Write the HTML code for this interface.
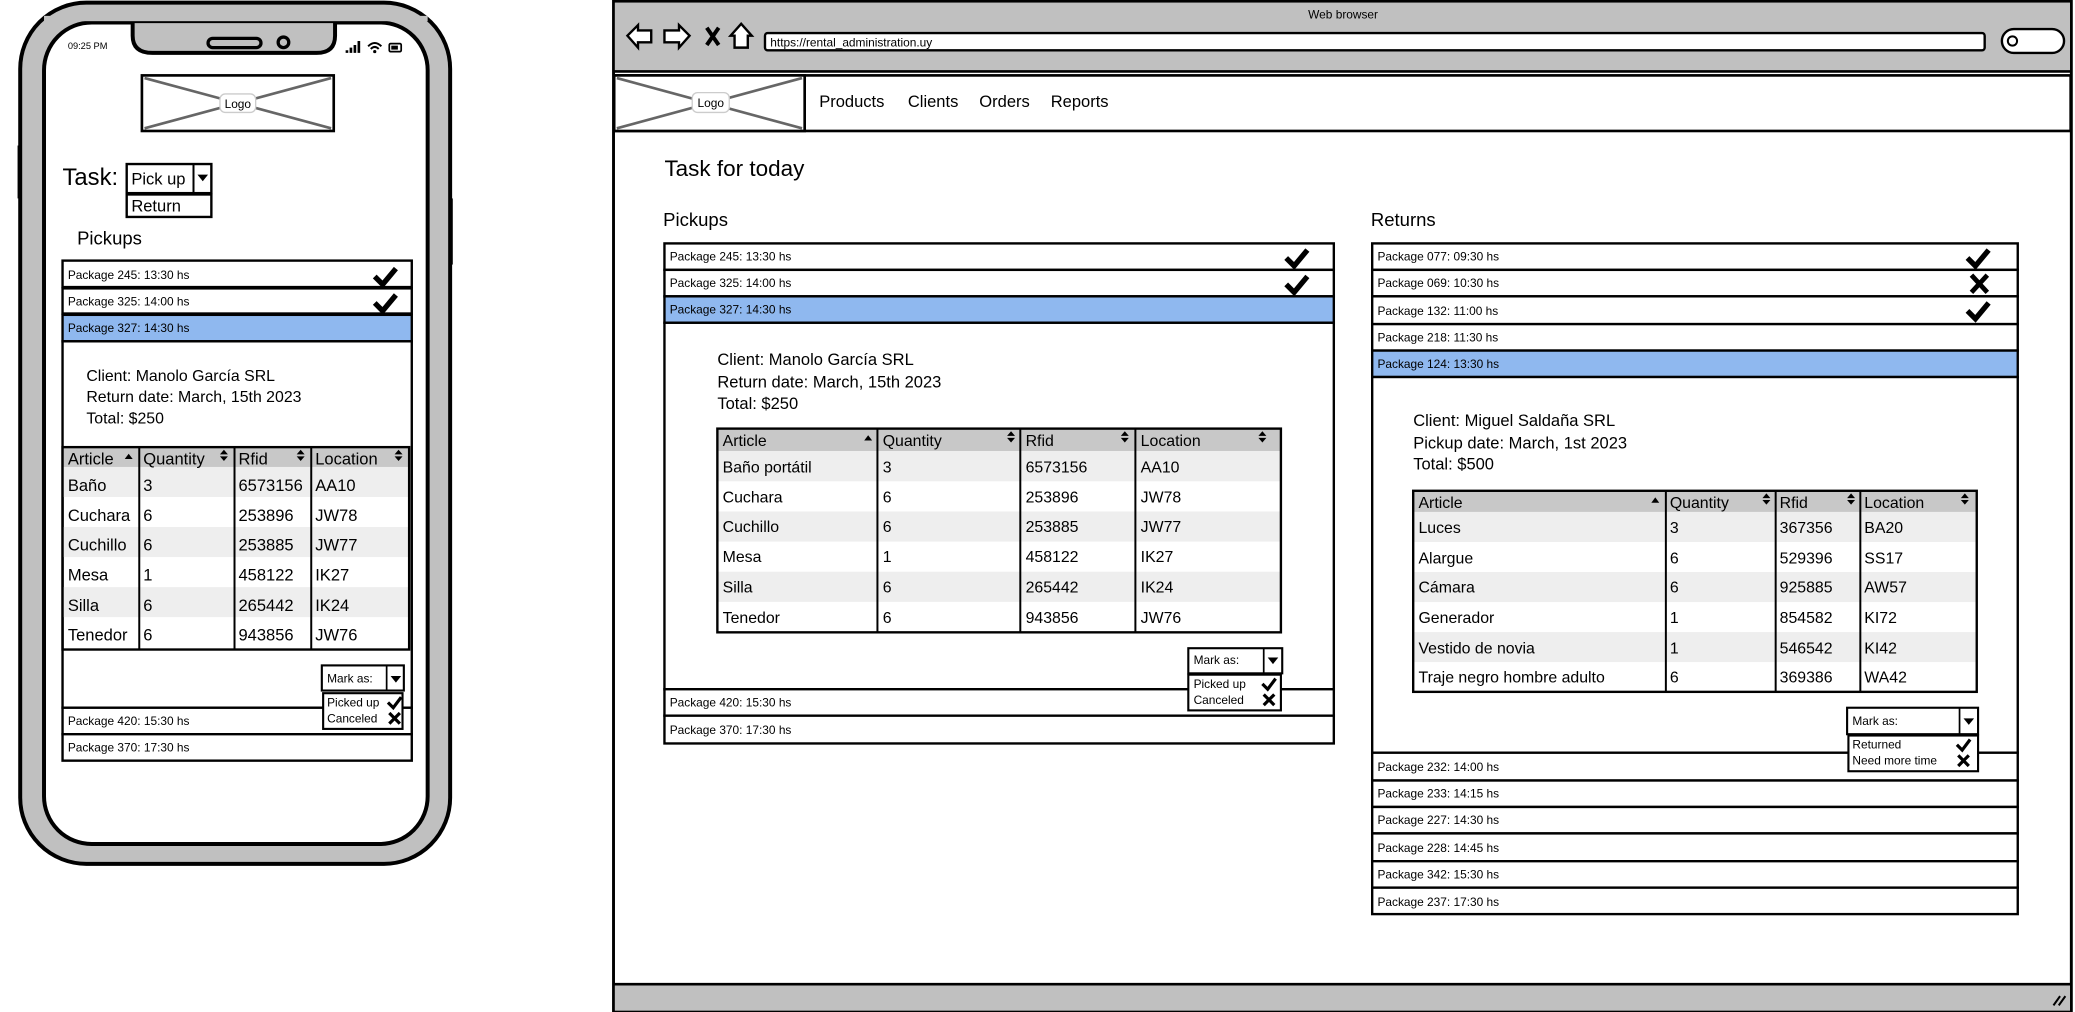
<!DOCTYPE html>
<html><head><meta charset="utf-8"><style>
html,body{margin:0;padding:0;background:#fff;overflow:hidden}
svg{display:block}
text{font-family:"Liberation Sans",sans-serif;fill:#000}
</style></head><body>
<svg width="2075" height="1012" viewBox="0 0 1568 765" xmlns="http://www.w3.org/2000/svg">
<defs>
<g id="chk"><path d="M0,7 L6,13 L16,1" fill="none" stroke="#000" stroke-width="4"/></g>
<g id="xx"><path d="M1,1 L13,14 M13,1 L1,14" fill="none" stroke="#000" stroke-width="3.6"/></g>
<g id="schk"><path d="M0,4 L4,8 L10,0" fill="none" stroke="#000" stroke-width="2.4"/></g>
<g id="sxx"><path d="M0,0 L8,8 M8,0 L0,8" fill="none" stroke="#000" stroke-width="2.4"/></g>
<g id="ud"><path d="M0,3.5 L3,0 L6,3.5Z M0,5 L6,5 L3,8.5Z" fill="#000"/></g>
<g id="up"><path d="M0,4 L3,0 L6,4Z" fill="#000"/></g>
<g id="dn"><path d="M0,0 L8,0 L4,5Z" fill="#000"/></g>
</defs>

<!-- ================= PHONE ================= -->
<rect x="15" y="2" width="325" height="651" rx="50" fill="#c0c0c0" stroke="#000" stroke-width="3"/>
<rect x="339" y="150" width="3" height="50" fill="#000"/>
<rect x="13" y="110" width="3" height="40" fill="#000"/>
<rect x="33" y="17" width="290" height="621" rx="36" fill="#fff" stroke="#000" stroke-width="3"/>
<path d="M100,16 L100,27 Q100,40 115,40 L239,40 Q253,40 253,27 L253,16 Z" fill="#c0c0c0" stroke="#000" stroke-width="3"/>
<rect x="33" y="12" width="290" height="4" fill="#c0c0c0"/>
<rect x="157" y="29" width="40" height="7" rx="3.5" fill="#c0c0c0" stroke="#000" stroke-width="2.5"/>
<circle cx="214" cy="32" r="4" fill="#c0c0c0" stroke="#000" stroke-width="2.5"/>
<text x="51" y="37" font-size="7">09:25 PM</text>
<path d="M261,40h2v-2h-2z M264,40h2v-4h-2z M267,40h2v-6h-2z M270,40h2v-9h-2z" fill="#000"/>
<path d="M278,35 Q283,30 288,35 M280,37 Q283,34 286,37" fill="none" stroke="#000" stroke-width="1.5"/><circle cx="283" cy="39" r="1.2"/>
<rect x="294" y="33" width="9" height="6" rx="1" fill="none" stroke="#000" stroke-width="1.3"/><rect x="295.5" y="34.5" width="5" height="3"/>
<!-- logo -->
<rect x="107" y="57" width="145" height="42" fill="#fff" stroke="#000" stroke-width="2"/>
<path d="M109,59 L250,97 M109,97 L250,59" stroke="#666" stroke-width="2"/>
<rect x="166" y="71" width="27" height="14" rx="4" fill="#fff" stroke="#ccc"/>
<text x="179.5" y="81.5" font-size="9" text-anchor="middle">Logo</text>
<!-- task -->
<text x="47" y="140" font-size="18">Task:</text>
<rect x="95.5" y="124" width="64" height="22" fill="#fff" stroke="#000" stroke-width="1.8"/>
<line x1="146" y1="124" x2="146" y2="146" stroke="#000" stroke-width="1.5"/>
<use href="#dn" x="149" y="132"/>
<text x="99" y="139.5" font-size="12.5">Pick up</text>
<rect x="95.5" y="147" width="64" height="17" fill="#fff" stroke="#000" stroke-width="1.8"/>
<text x="99" y="160" font-size="12.5">Return</text>
<text x="58" y="185" font-size="14">Pickups</text>
<!-- list -->
<rect x="47" y="197" width="264" height="20" fill="#fff" stroke="#000" stroke-width="1.8"/>
<text x="51" y="211" font-size="9">Package 245: 13:30 hs</text>
<use href="#chk" x="283" y="202"/>
<rect x="47" y="218" width="264" height="19" fill="#fff" stroke="#000" stroke-width="1.8"/>
<text x="51" y="231" font-size="9">Package 325: 14:00 hs</text>
<use href="#chk" x="283" y="222"/>
<rect x="47" y="238" width="264" height="20" fill="#8fb8ef" stroke="#000" stroke-width="1.8"/>
<text x="51" y="251" font-size="9">Package 327: 14:30 hs</text>
<rect x="47" y="258" width="264" height="277" fill="#fff" stroke="#000" stroke-width="1.8"/>
<text x="65" y="288" font-size="12">Client: Manolo García SRL</text>
<text x="65" y="304" font-size="12">Return date: March, 15th 2023</text>
<text x="65" y="320" font-size="12">Total: $250</text>
<!-- phone table -->
<rect x="47" y="338" width="262" height="15" fill="#c8c8c8"/>
<rect x="47" y="353" width="262" height="22.7" fill="#eee"/>
<rect x="47" y="398.4" width="262" height="22.7" fill="#eee"/>
<rect x="47" y="443.8" width="262" height="22.7" fill="#eee"/>
<rect x="47" y="338" width="262" height="153" fill="none" stroke="#000" stroke-width="1.8"/>
<path d="M105,338V491 M177,338V491 M235,338V491" stroke="#000" stroke-width="1.5"/>
<g font-size="12.5">
<text x="51" y="351">Article</text><use href="#up" x="94" y="343"/>
<text x="108" y="351">Quantity</text><use href="#ud" x="166" y="340"/>
<text x="180" y="351">Rfid</text><use href="#ud" x="224" y="340"/>
<text x="238" y="351">Location</text><use href="#ud" x="298" y="340"/>
<text x="51" y="371">Baño</text><text x="108" y="371">3</text><text x="180" y="371">6573156</text><text x="238" y="371">AA10</text>
<text x="51" y="394">Cuchara</text><text x="108" y="394">6</text><text x="180" y="394">253896</text><text x="238" y="394">JW78</text>
<text x="51" y="416">Cuchillo</text><text x="108" y="416">6</text><text x="180" y="416">253885</text><text x="238" y="416">JW77</text>
<text x="51" y="439">Mesa</text><text x="108" y="439">1</text><text x="180" y="439">458122</text><text x="238" y="439">IK27</text>
<text x="51" y="462">Silla</text><text x="108" y="462">6</text><text x="180" y="462">265442</text><text x="238" y="462">IK24</text>
<text x="51" y="484">Tenedor</text><text x="108" y="484">6</text><text x="180" y="484">943856</text><text x="238" y="484">JW76</text>
</g>
<rect x="47" y="535" width="264" height="20" fill="#fff" stroke="#000" stroke-width="1.8"/>
<text x="51" y="548" font-size="9">Package 420: 15:30 hs</text>
<rect x="47" y="555" width="264" height="20" fill="#fff" stroke="#000" stroke-width="1.8"/>
<text x="51" y="568" font-size="9">Package 370: 17:30 hs</text>
<rect x="243" y="503" width="62" height="19" fill="#fff" stroke="#000" stroke-width="1.6"/>
<line x1="292" y1="503" x2="292" y2="522" stroke="#000" stroke-width="1.3"/>
<use href="#dn" x="295" y="511"/>
<text x="247" y="516" font-size="9">Mark as:</text>
<rect x="244" y="524" width="60" height="27" fill="#fff" stroke="#000" stroke-width="1.6"/>
<text x="247" y="534" font-size="9">Picked up</text><use href="#schk" x="293" y="527"/>
<text x="247" y="546" font-size="9">Canceled</text><use href="#sxx" x="294" y="539"/>

<!-- ================= BROWSER ================= -->
<rect x="463.5" y="1" width="1102" height="763" fill="#fff" stroke="#000" stroke-width="2.2"/>
<rect x="464.5" y="2" width="1100" height="52" fill="#c0c0c0"/>
<line x1="463" y1="54" x2="1566" y2="54" stroke="#000" stroke-width="2"/>
<text x="1015" y="14" font-size="9" text-anchor="middle">Web browser</text>
<path d="M474,27 L482,19 L482,23 L492,23 L492,32 L482,32 L482,36 Z" fill="#fff" stroke="#000" stroke-width="1.8"/>
<path d="M521,27 L513,19 L513,23 L502,23 L502,32 L513,32 L513,36 Z" fill="#fff" stroke="#000" stroke-width="1.8"/>
<path d="M534,21 L543,34 M543,21 L534,34" stroke="#000" stroke-width="3"/>
<path d="M560,18 L568,27 L565,27 L565,36 L555,36 L555,27 L552,27 Z" fill="#fff" stroke="#000" stroke-width="1.8"/>
<rect x="578" y="25" width="922" height="13" rx="2" fill="#fff" stroke="#000" stroke-width="1.8"/>
<text x="582" y="35" font-size="9">https://rental_administration.uy</text>
<rect x="1513" y="22" width="47" height="18" rx="9" fill="#fff" stroke="#000" stroke-width="1.8"/>
<circle cx="1521" cy="31" r="3.5" fill="none" stroke="#000" stroke-width="1.5"/>
<!-- nav -->
<rect x="464" y="57" width="1101" height="42" fill="#fff" stroke="#000" stroke-width="2"/>
<rect x="464" y="57" width="144" height="42" fill="#fff" stroke="#000" stroke-width="2"/>
<path d="M466,59 L606,97 M466,97 L606,59" stroke="#666" stroke-width="2"/>
<rect x="523" y="70" width="28" height="15" rx="4" fill="#fff" stroke="#ccc"/>
<text x="537" y="81" font-size="9" text-anchor="middle">Logo</text>
<g font-size="12.5"><text x="619" y="81">Products</text><text x="686" y="81">Clients</text><text x="740" y="81">Orders</text><text x="794" y="81">Reports</text></g>
<!-- bottom bar -->
<rect x="464.5" y="744" width="1100" height="20" fill="#c0c0c0"/>
<line x1="463" y1="744" x2="1566" y2="744" stroke="#000" stroke-width="2"/>
<path d="M1552,760 L1557,753 M1556,760 L1561,753" stroke="#000" stroke-width="1.5"/>

<text x="502" y="133" font-size="17">Task for today</text>
<text x="501" y="171" font-size="14">Pickups</text>
<text x="1036" y="171" font-size="14">Returns</text>

<!-- pickups list -->
<g font-size="9">
<rect x="502" y="184" width="506" height="20" fill="#fff" stroke="#000" stroke-width="1.8"/><text x="506" y="197">Package 245: 13:30 hs</text>
<rect x="502" y="204" width="506" height="20" fill="#fff" stroke="#000" stroke-width="1.8"/><text x="506" y="217">Package 325: 14:00 hs</text>
<rect x="502" y="224" width="506" height="20" fill="#8fb8ef" stroke="#000" stroke-width="1.8"/><text x="506" y="237">Package 327: 14:30 hs</text>
<rect x="502" y="244" width="506" height="277" fill="#fff" stroke="#000" stroke-width="1.8"/>
<rect x="502" y="521" width="506" height="20" fill="#fff" stroke="#000" stroke-width="1.8"/><text x="506" y="534">Package 420: 15:30 hs</text>
<rect x="502" y="541" width="506" height="21" fill="#fff" stroke="#000" stroke-width="1.8"/><text x="506" y="555">Package 370: 17:30 hs</text>
</g>
<use href="#chk" x="972" y="188"/><use href="#chk" x="972" y="208"/>
<g font-size="12.5">
<text x="542" y="276">Client: Manolo García SRL</text>
<text x="542" y="293">Return date: March, 15th 2023</text>
<text x="542" y="309">Total: $250</text>
</g>
<rect x="542" y="324" width="426" height="17" fill="#c8c8c8"/>
<rect x="542" y="341" width="426" height="22.8" fill="#eee"/>
<rect x="542" y="386.6" width="426" height="22.8" fill="#eee"/>
<rect x="542" y="432.2" width="426" height="22.8" fill="#eee"/>
<rect x="542" y="324" width="426" height="154" fill="none" stroke="#000" stroke-width="1.8"/>
<path d="M663,324V478 M771,324V478 M858,324V478" stroke="#000" stroke-width="1.5"/>
<g font-size="12">
<text x="546" y="337">Article</text><use href="#up" x="653" y="329"/>
<text x="667" y="337">Quantity</text><use href="#ud" x="761" y="326"/>
<text x="775" y="337">Rfid</text><use href="#ud" x="847" y="326"/>
<text x="862" y="337">Location</text><use href="#ud" x="951" y="326"/>
<text x="546" y="357">Baño portátil</text><text x="667" y="357">3</text><text x="775" y="357">6573156</text><text x="862" y="357">AA10</text>
<text x="546" y="380">Cuchara</text><text x="667" y="380">6</text><text x="775" y="380">253896</text><text x="862" y="380">JW78</text>
<text x="546" y="402">Cuchillo</text><text x="667" y="402">6</text><text x="775" y="402">253885</text><text x="862" y="402">JW77</text>
<text x="546" y="425">Mesa</text><text x="667" y="425">1</text><text x="775" y="425">458122</text><text x="862" y="425">IK27</text>
<text x="546" y="448">Silla</text><text x="667" y="448">6</text><text x="775" y="448">265442</text><text x="862" y="448">IK24</text>
<text x="546" y="471">Tenedor</text><text x="667" y="471">6</text><text x="775" y="471">943856</text><text x="862" y="471">JW76</text>
</g>
<rect x="898" y="490" width="71" height="19" fill="#fff" stroke="#000" stroke-width="1.6"/>
<line x1="955" y1="490" x2="955" y2="509" stroke="#000" stroke-width="1.3"/>
<use href="#dn" x="958" y="497"/>
<text x="902" y="502" font-size="9">Mark as:</text>
<rect x="898" y="510" width="70" height="27" fill="#fff" stroke="#000" stroke-width="1.6"/>
<text x="902" y="520" font-size="9">Picked up</text><use href="#schk" x="954" y="513"/>
<text x="902" y="532" font-size="9">Canceled</text><use href="#sxx" x="955" y="525"/>

<!-- returns list -->
<g font-size="9">
<rect x="1037" y="184" width="488" height="20" fill="#fff" stroke="#000" stroke-width="1.8"/><text x="1041" y="197">Package 077: 09:30 hs</text>
<rect x="1037" y="204" width="488" height="20" fill="#fff" stroke="#000" stroke-width="1.8"/><text x="1041" y="217">Package 069: 10:30 hs</text>
<rect x="1037" y="224" width="488" height="21" fill="#fff" stroke="#000" stroke-width="1.8"/><text x="1041" y="238">Package 132: 11:00 hs</text>
<rect x="1037" y="245" width="488" height="20" fill="#fff" stroke="#000" stroke-width="1.8"/><text x="1041" y="258">Package 218: 11:30 hs</text>
<rect x="1037" y="265" width="488" height="20" fill="#8fb8ef" stroke="#000" stroke-width="1.8"/><text x="1041" y="278">Package 124: 13:30 hs</text>
<rect x="1037" y="285" width="488" height="284" fill="#fff" stroke="#000" stroke-width="1.8"/>
<rect x="1037" y="569" width="488" height="21" fill="#fff" stroke="#000" stroke-width="1.8"/><text x="1041" y="583">Package 232: 14:00 hs</text>
<rect x="1037" y="590" width="488" height="20" fill="#fff" stroke="#000" stroke-width="1.8"/><text x="1041" y="603">Package 233: 14:15 hs</text>
<rect x="1037" y="610" width="488" height="20" fill="#fff" stroke="#000" stroke-width="1.8"/><text x="1041" y="623">Package 227: 14:30 hs</text>
<rect x="1037" y="630" width="488" height="21" fill="#fff" stroke="#000" stroke-width="1.8"/><text x="1041" y="644">Package 228: 14:45 hs</text>
<rect x="1037" y="651" width="488" height="20" fill="#fff" stroke="#000" stroke-width="1.8"/><text x="1041" y="664">Package 342: 15:30 hs</text>
<rect x="1037" y="671" width="488" height="20" fill="#fff" stroke="#000" stroke-width="1.8"/><text x="1041" y="685">Package 237: 17:30 hs</text>
</g>
<use href="#chk" x="1487" y="188"/><use href="#xx" x="1489" y="207"/><use href="#chk" x="1487" y="228"/>
<g font-size="12.5">
<text x="1068" y="322">Client: Miguel Saldaña SRL</text>
<text x="1068" y="339">Pickup date: March, 1st 2023</text>
<text x="1068" y="355">Total: $500</text>
</g>
<rect x="1068" y="371" width="426" height="16" fill="#c8c8c8"/>
<rect x="1068" y="387" width="426" height="22.7" fill="#eee"/>
<rect x="1068" y="432.4" width="426" height="22.7" fill="#eee"/>
<rect x="1068" y="477.8" width="426" height="22.7" fill="#eee"/>
<rect x="1068" y="371" width="426" height="152" fill="none" stroke="#000" stroke-width="1.8"/>
<path d="M1259,371V523 M1342,371V523 M1406,371V523" stroke="#000" stroke-width="1.5"/>
<g font-size="12">
<text x="1072" y="384">Article</text><use href="#up" x="1248" y="376"/>
<text x="1262" y="384">Quantity</text><use href="#ud" x="1332" y="373"/>
<text x="1345" y="384">Rfid</text><use href="#ud" x="1396" y="373"/>
<text x="1409" y="384">Location</text><use href="#ud" x="1482" y="373"/>
<text x="1072" y="403">Luces</text><text x="1262" y="403">3</text><text x="1345" y="403">367356</text><text x="1409" y="403">BA20</text>
<text x="1072" y="426">Alargue</text><text x="1262" y="426">6</text><text x="1345" y="426">529396</text><text x="1409" y="426">SS17</text>
<text x="1072" y="448">Cámara</text><text x="1262" y="448">6</text><text x="1345" y="448">925885</text><text x="1409" y="448">AW57</text>
<text x="1072" y="471">Generador</text><text x="1262" y="471">1</text><text x="1345" y="471">854582</text><text x="1409" y="471">KI72</text>
<text x="1072" y="494">Vestido de novia</text><text x="1262" y="494">1</text><text x="1345" y="494">546542</text><text x="1409" y="494">KI42</text>
<text x="1072" y="516">Traje negro hombre adulto</text><text x="1262" y="516">6</text><text x="1345" y="516">369386</text><text x="1409" y="516">WA42</text>
</g>
<rect x="1396" y="535" width="99" height="20" fill="#fff" stroke="#000" stroke-width="1.6"/>
<line x1="1481" y1="535" x2="1481" y2="555" stroke="#000" stroke-width="1.3"/>
<use href="#dn" x="1484" y="543"/>
<text x="1400" y="548" font-size="9">Mark as:</text>
<rect x="1397" y="556" width="98" height="27" fill="#fff" stroke="#000" stroke-width="1.6"/>
<text x="1400" y="566" font-size="9">Returned</text><use href="#schk" x="1479" y="559"/>
<text x="1400" y="578" font-size="9">Need more time</text><use href="#sxx" x="1480" y="571"/>
</svg>
</body></html>
